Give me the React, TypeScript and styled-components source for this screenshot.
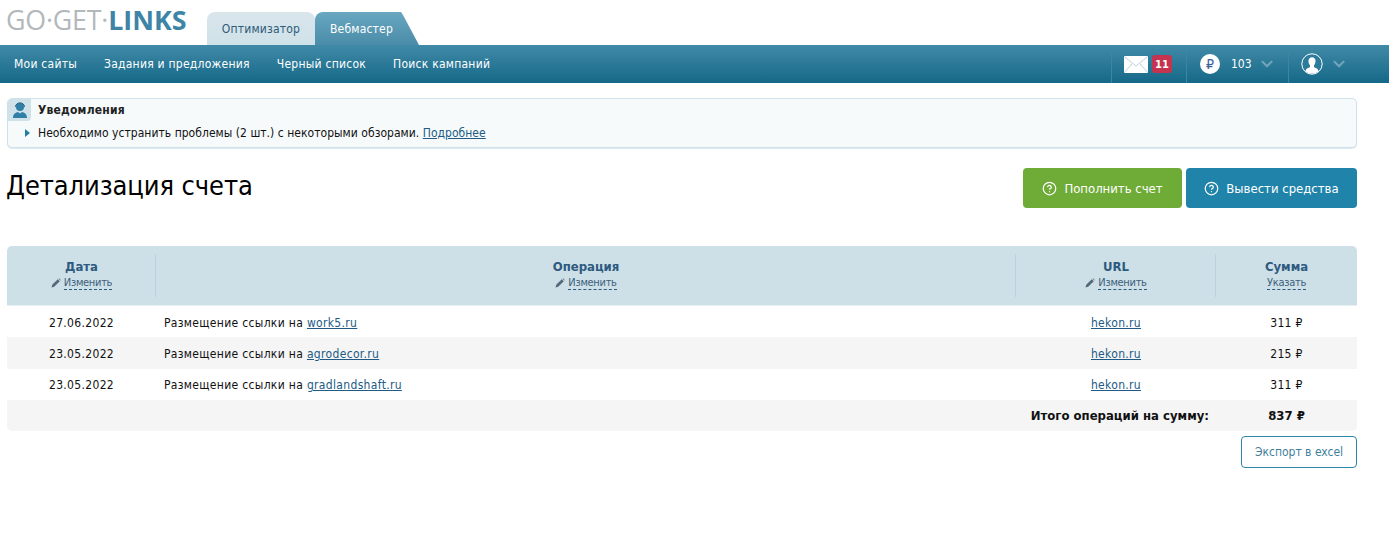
import React from 'react';
import styled, { createGlobalStyle } from 'styled-components';
import { ChevronDown, CircleHelp } from 'lucide-react';

const FONT = `"DejaVu Sans", Tahoma, sans-serif`;

const GlobalStyle = createGlobalStyle`
  html, body { margin: 0; padding: 0; background: #fff; }
  body { font-family: ${FONT}; font-stretch: condensed; font-size: 12px; color: #111; }
  a { color: #205a84; }
`;

const Top = styled.div`
  height: 45px;
  display: flex;
  align-items: flex-end;
  padding-left: 7px;
`;

const Logo = styled.div`
  width: 200px;
  align-self: flex-start;
  padding-top: 3px;
  margin-left: -1px;
  margin-right: 1px;
  font-family: "Open Sans", sans-serif;
  font-stretch: normal;
  font-size: 26.8px;
  line-height: 34px;
  color: #b3b8bb;
  white-space: nowrap;
  letter-spacing: -0.2px;
  b { color: #3d84a6; font-weight: 700; letter-spacing: 0; }
`;

const TabLight = styled.div`
  width: 108px;
  height: 33px;
  box-sizing: border-box;
  padding-top: 10px;
  text-align: center;
  letter-spacing: 0.2px;
  border-radius: 8px 8px 0 0;
  background: linear-gradient(#d9e6ec, #cfe1e9);
  color: #2e5a78;
`;

const TabActive = styled.div`
  position: relative;
  width: 86px;
  height: 33px;
  box-sizing: border-box;
  padding: 10px 0 0 15px;
  letter-spacing: 0.2px;
  white-space: nowrap;
  border-radius: 8px 0 0 0;
  background: linear-gradient(#69a7c0, #4a8ca9);
  color: #fff;
  &::after {
    content: '';
    position: absolute;
    top: 0;
    bottom: 0;
    left: 85px;
    width: 19px;
    background: linear-gradient(#69a7c0, #4a8ca9);
    clip-path: polygon(0 0, 1px 0, 3px 3px, 19px 100%, 0 100%);
  }
`;

const Nav = styled.nav`
  height: 38px;
  display: flex;
  align-items: center;
  justify-content: space-between;
  background: linear-gradient(#418aa7, #156888);
  color: #fff;
`;

const NavLinks = styled.div`
  display: flex;
  gap: 27px;
  padding-left: 14px;
  letter-spacing: 0.25px;
`;

const NavRight = styled.div`
  display: flex;
  height: 100%;
  width: 278px;
`;

const NavCell = styled.div<{ $w: number }>`
  width: ${p => p.$w}px;
  box-sizing: border-box;
  display: flex;
  align-items: center;
  padding-left: 12px;
  border-left: 1px solid #3b86a3;
`;

const Badge = styled.span`
  width: 20px;
  height: 18px;
  margin-left: 4px;
  display: flex;
  align-items: center;
  justify-content: center;
  border-radius: 3px;
  background: #c5344e;
  font-size: 11px;
  font-weight: 700;
`;

const Coin = styled.span`
  width: 20px;
  height: 20px;
  margin-left: 1px;
  border-radius: 50%;
  background: #fff;
  color: #3a5f9a;
  display: flex;
  align-items: center;
  justify-content: center;
  font-size: 14px;
`;

const Balance = styled.span`
  margin: 0 6px 0 11px;
`;

const Chevron = styled(ChevronDown).attrs({ size: 18, strokeWidth: 3 })`
  color: #6fa3ba;
`;

const UserChevron = styled(Chevron)`
  margin-left: 7px;
`;

const Page = styled.main`
  padding: 15px 32px 0 7px;
`;

const Notice = styled.section`
  height: 50px;
  box-sizing: border-box;
  position: relative;
  border: 1px solid #cfe1e9;
  border-radius: 5px;
  background: #f6fafb;
  box-shadow: 0 1px 1px #dde8ed;
  padding: 3px 0 0 30px;
`;

const NoticeIcon = styled.span`
  position: absolute;
  left: 0;
  top: 0;
  width: 23px;
  height: 22px;
  display: flex;
  align-items: center;
  justify-content: center;
  background: #cfe1e9;
  border-radius: 4px 0 4px 0;
`;

const NoticeTitle = styled.div`
  font-weight: 700;
  color: #222;
  line-height: 16px;
  letter-spacing: 0.2px;
`;

const NoticeText = styled.div`
  margin-top: 7px;
  line-height: 16px;
  letter-spacing: 0.035px;
  position: relative;
  &::before {
    content: '';
    position: absolute;
    left: -13px;
    top: 4px;
    border-left: 5px solid #1f7fa6;
    border-top: 4px solid transparent;
    border-bottom: 4px solid transparent;
  }
`;

const TitleRow = styled.div`
  display: flex;
  justify-content: space-between;
  margin-top: 20px;
  height: 78px;
`;

const Title = styled.h1`
  margin: 0 0 0 -1px;
  font-size: 27px;
  font-weight: 400;
  line-height: 36px;
  letter-spacing: -0.1px;
  color: #000;
`;

const Actions = styled.div`
  display: flex;
  gap: 4px;
`;

const ActionButton = styled.button<{ $bg: string; $w: number }>`
  width: ${p => p.$w}px;
  height: 40px;
  border: 0;
  border-radius: 4px;
  background: ${p => p.$bg};
  color: #fff;
  font-family: ${FONT};
  font-stretch: condensed;
  font-size: 13px;
  display: flex;
  align-items: center;
  justify-content: center;
  gap: 7px;
  padding: 0;
`;

const Table = styled.table`
  width: 100%;
  border-collapse: collapse;
  table-layout: fixed;
`;

const HeadRow = styled.tr`
  height: 59px;
  background: #cde0e8;
  th:first-child { border-top-left-radius: 5px; }
  th:last-child { border-top-right-radius: 5px; }
`;

const Th = styled.th<{ $w?: number }>`
  width: ${p => (p.$w ? `${p.$w}px` : 'auto')};
  padding: 0;
  font-weight: 400;
  position: relative;
  vertical-align: top;
  &::before {
    content: '';
    position: absolute;
    left: 0;
    right: 0;
    bottom: -1px;
    height: 1px;
    background: #e6eff3;
  }
  &:not(:last-child)::after {
    content: '';
    position: absolute;
    right: 0;
    top: 8px;
    bottom: 8px;
    width: 1px;
    background: #bdd2dc;
  }
`;

const HeadLabel = styled.div`
  margin-top: 13px;
  line-height: 16px;
  font-weight: 700;
  font-size: 13px;
  color: #2e5a80;
`;

const HeadAction = styled.div`
  display: flex;
  justify-content: center;
  align-items: center;
  gap: 3px;
  margin-top: 1px;
  span {
    font-size: 11px;
    line-height: 13px;
    letter-spacing: -0.3px;
    color: #3d5f7c;
    border-bottom: 1px dashed #2e5a80;
  }
`;

const Row = styled.tr<{ $alt?: boolean; $h: number; $pad: number }>`
  height: ${p => p.$h}px;
  letter-spacing: 0.33px;
  background: ${p => (p.$alt ? '#f5f5f5' : '#fff')};
  td { padding-top: ${p => p.$pad}px; }
`;

const Td = styled.td`
  padding: 0;
  text-align: center;
  line-height: 16px;
`;

const OpCell = styled(Td)`
  padding-left: 8px;
  text-align: left;
`;

const TotalRow = styled.tr`
  height: 31px;
  background: #f5f5f5;
  font-weight: 700;
  font-size: 13px;
  td:first-child { border-bottom-left-radius: 5px; }
  td:last-child { border-bottom-right-radius: 5px; }
`;

const TotalLabel = styled(Td)`
  text-align: right;
  padding-right: 7px;
`;

const ExportRow = styled.div`
  display: flex;
  justify-content: flex-end;
  margin-top: 5px;
`;

const ExportButton = styled.button`
  width: 116px;
  height: 32px;
  box-sizing: border-box;
  border: 1px solid #2b86a8;
  border-radius: 4px;
  background: #fff;
  color: #3f7f9c;
  font-family: ${FONT};
  font-stretch: condensed;
  font-size: 12px;
  padding: 0;
`;

const Pencil = () => (
  <svg width="10" height="10" viewBox="0 0 10 10">
    <path d="M0.5 9.5 L1.2 6.8 L6.8 1.2 L8.8 3.2 L3.2 8.8 Z M7.4 0.6 L8 0.2 L9.8 2 L9.4 2.6 Z" fill="#56687a" />
  </svg>
);

const Envelope = () => (
  <svg width="24" height="17" viewBox="0 0 24 17">
    <rect width="24" height="17" rx="1" fill="#fff" />
    <path d="M0.5 0.8 L12 10 L23.5 0.8 M0.5 16.2 L8.5 7.5 M23.5 16.2 L15.5 7.5" stroke="#b5d3e0" fill="none" />
  </svg>
);

const UserIcon = () => (
  <svg width="22" height="22" viewBox="0 0 22 22">
    <circle cx="11" cy="11" r="10.2" fill="#2d7b9b" stroke="#fff" />
    <path d="M4.5 18.2 C5 15 8 15 9 14 L9 12.5 C7.8 11 7.5 9.5 7.5 7.8 C7.5 5.5 9 4.2 11 4.2 C13 4.2 14.5 5.5 14.5 7.8 C14.5 9.5 14.2 11 13 12.5 L13 14 C14 15 17 15 17.5 18.2 C14 21.4 8 21.4 4.5 18.2 Z" fill="#fff" />
  </svg>
);

const Operator = () => (
  <svg width="16" height="18" viewBox="0 0 16 18">
    <circle cx="8" cy="6" r="4" fill="#2f7fa6" />
    <path d="M3.5 6 C3.5 0.5 12.5 0.5 12.5 6" stroke="#235f80" fill="none" />
    <path d="M1 17 C1 12.5 4 11.5 6 11 L8 12.5 L10 11 C12 11.5 15 12.5 15 17 Z" fill="#2f7fa6" />
  </svg>
);

const rows = [
  { date: '27.06.2022', site: 'work5.ru', sum: 311, h: 32, pad: 4 },
  { date: '23.05.2022', site: 'agrodecor.ru', sum: 215, alt: true, h: 32, pad: 2 },
  { date: '23.05.2022', site: 'gradlandshaft.ru', sum: 311, h: 31, pad: 1 },
];

const Head: React.FC<{ label: string; action: string; pencil?: boolean; w?: number }> = ({ label, action, pencil = true, w }) => (
  <Th $w={w}>
    <HeadLabel>{label}</HeadLabel>
    <HeadAction>
      {pencil && <Pencil />}
      <span>{action}</span>
    </HeadAction>
  </Th>
);

export default function App() {
  return (
    <>
      <GlobalStyle />
      <Top>
        <Logo>GO·GET·<b>LINKS</b></Logo>
        <TabLight>Оптимизатор</TabLight>
        <TabActive>Вебмастер</TabActive>
      </Top>
      <Nav>
        <NavLinks>
          <span>Мои сайты</span>
          <span>Задания и предложения</span>
          <span>Черный список</span>
          <span>Поиск кампаний</span>
        </NavLinks>
        <NavRight>
          <NavCell $w={75}>
            <Envelope />
            <Badge>11</Badge>
          </NavCell>
          <NavCell $w={102}>
            <Coin>₽</Coin>
            <Balance>103</Balance>
            <Chevron />
          </NavCell>
          <NavCell $w={101}>
            <UserIcon />
            <UserChevron />
          </NavCell>
        </NavRight>
      </Nav>
      <Page>
        <Notice>
          <NoticeIcon><Operator /></NoticeIcon>
          <NoticeTitle>Уведомления</NoticeTitle>
          <NoticeText>
            Необходимо устранить проблемы (2 шт.) с некоторыми обзорами. <a href="#">Подробнее</a>
          </NoticeText>
        </Notice>
        <TitleRow>
          <Title>Детализация счета</Title>
          <Actions>
            <ActionButton $bg="#6fab37" $w={159}><CircleHelp size={15} />Пополнить счет</ActionButton>
            <ActionButton $bg="#2083aa" $w={171}><CircleHelp size={15} />Вывести средства</ActionButton>
          </Actions>
        </TitleRow>
        <Table>
          <thead>
            <HeadRow>
              <Head label="Дата" action="Изменить" w={149} />
              <Head label="Операция" action="Изменить" />
              <Head label="URL" action="Изменить" w={200} />
              <Head label="Сумма" action="Указать" pencil={false} w={141} />
            </HeadRow>
          </thead>
          <tbody>
            {rows.map(r => (
              <Row key={r.site} $alt={r.alt} $h={r.h} $pad={r.pad}>
                <Td>{r.date}</Td>
                <OpCell>Размещение ссылки на <a href="#">{r.site}</a></OpCell>
                <Td><a href="#">hekon.ru</a></Td>
                <Td>{r.sum} ₽</Td>
              </Row>
            ))}
            <TotalRow>
              <TotalLabel colSpan={3}>Итого операций на сумму:</TotalLabel>
              <Td>837 ₽</Td>
            </TotalRow>
          </tbody>
        </Table>
        <ExportRow>
          <ExportButton>Экспорт в excel</ExportButton>
        </ExportRow>
      </Page>
    </>
  );
}
